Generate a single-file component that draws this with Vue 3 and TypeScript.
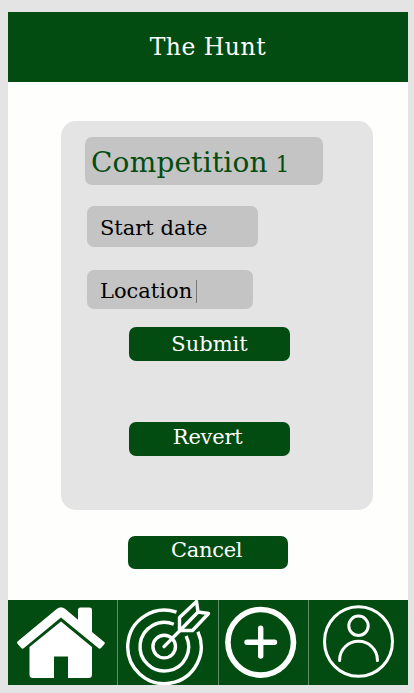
<script setup lang="ts">
import { ref } from 'vue'

const fields = ref([
  { id: 'start', label: 'Start date', focused: false },
  { id: 'location', label: 'Location', focused: true },
])
</script>

<template>
  <div class="screen">
    <header class="header"><h1 class="label">The Hunt</h1></header>
    <main class="content">
      <section class="card">
        <div class="field title"><span class="label">Competition <span class="num">1</span></span></div>
        <div v-for="f in fields" :key="f.id" class="field" :class="f.id">
          <span class="label">{{ f.label }}</span>
          <i v-if="f.focused" class="caret"></i>
        </div>
        <button class="btn submit"><span class="label">Submit</span></button>
        <button class="btn revert"><span class="label">Revert</span></button>
      </section>
      <button class="btn cancel"><span class="label">Cancel</span></button>
    </main>
    <nav class="nav">
      <a class="tab">
        <svg width="109" height="84" viewBox="8 600 109 84" fill="#fff">
          <path d="M17.5 641.5 57 608.7q4-3 8 0l13 11V610q0-2.5 2.5-2.5h9q2.5 0 2.5 2.5v22l12.500 10.300q.8.8 0 1.600l-3.500 4.200q-1.200 1.200-2.400.2L61 617.500 23.700 648.200q-1.200 1-2.400-.2l-3.800-4.300q-1-1.200 0-2.200z" />
          <path d="M61 621.500 92 647v27.500q0 3.500-3.500 3.500H68v-21.500H54V678H33q-3.500 0-3.500-3.500V647z" />
        </svg>
      </a>
      <a class="tab">
        <svg width="100" height="85" viewBox="118 600 100 85" fill="none" stroke="#fff" stroke-width="3.400">
          <path d="M176.500 612.200A36.700 36.700 0 1 0 197.900 631.800" />
          <path d="M173.800 624.300A24.300 24.300 0 1 0 186.100 635.900" />
          <circle cx="164.200" cy="646.600" r="11.300" />
          <path d="M164 646.600 180 630.500 197.500 612.500" stroke-linecap="round" />
          <path d="M179.500 630.500V617.500L196.500 601.500 198 612 208.500 613.500 192.500 630.500Z" stroke-linejoin="round" />
        </svg>
      </a>
      <a class="tab">
        <svg width="89" height="84" viewBox="219 600 89 84" fill="none" stroke="#fff">
          <circle cx="260.700" cy="642.300" r="32.800" stroke-width="5.600" />
          <path d="M247 642.200h27.500M260.700 628.300V656" stroke-width="5.400" stroke-linecap="round" />
        </svg>
      </a>
      <a class="tab">
        <svg width="98" height="84" viewBox="309 600 98 84" fill="none" stroke="#fff" stroke-width="3">
          <ellipse cx="358.500" cy="641.500" rx="34" ry="34.800" />
          <circle cx="358.500" cy="625.800" r="9.700" />
          <path d="M339.600 660.500V660a18.900 18.700 0 0 1 37.800 0v.5" stroke-linecap="round" />
        </svg>
      </a>
    </nav>
  </div>
</template>

<style>
body {
  background: #e4e4e4;
  overflow: hidden;
}
</style>

<style scoped>
.screen {
  box-sizing: border-box;
  width: 399.5px;
  height: 672.5px;
  margin: 12.3px 0 0 8.2px;
  background: #fefefc;
  font-family: 'DejaVu Serif', serif;
  font-size: 21px;
  display: flex;
  flex-direction: column;
  color: #000;
}
.header {
  height: 69.5px;
  flex: none;
  background: #034c11;
  color: #fff;
  padding-left: 141.5px;
}
h1 {
  margin: 0;
  font-size: 23.5px;
  font-weight: 400;
  line-height: 71px;
  letter-spacing: 0.5px;
}
.label {
  display: inline-block;
  white-space: nowrap;
}
.content {
  flex: 1;
  padding: 39.5px 0 0 52.8px;
}
.card {
  box-sizing: border-box;
  width: 312px;
  height: 389px;
  border-radius: 15px;
  background: #e4e4e4;
  padding: 15.7px 0 0 24px;
}
.field {
  display: flex;
  align-items: flex-start;
  box-sizing: border-box;
  border-radius: 7px;
  background: #c4c4c4;
}
.title {
  width: 238.5px;
  height: 48px;
  padding-left: 6px;
  font-size: 28px;
  line-height: 52px;
  letter-spacing: 0.2px;
  word-spacing: -1.5px;
  color: #034c11;
}
.num {
  font-size: 22px;
}
.start {
  width: 171px;
  height: 41.5px;
  margin: 20.8px 0 0 2px;
  padding-left: 13px;
  line-height: 45px;
}
.location {
  width: 166.5px;
  height: 39px;
  margin: 22.5px 0 0 2px;
  padding-left: 13px;
  line-height: 43px;
}
.location .label {
  width: 96px;
}
.caret {
  width: 1px;
  height: 23px;
  margin-top: 10px;
  background: #777;
}
.btn {
  display: flex;
  align-items: flex-start;
  width: 160.5px;
  height: 33.5px;
  padding: 0 0 0 42px;
  border: 0;
  border-radius: 7px;
  background: #034c11;
  color: #fff;
  font: inherit;
  text-align: left;
}
.submit {
  margin: 18.7px 0 0 44.3px;
  line-height: 34px;
}
.revert {
  margin: 61.5px 0 0 44.3px;
  padding-left: 43.5px;
  line-height: 30px;
  letter-spacing: -0.2px;
}
.cancel {
  margin: 25.4px 0 0 66.7px;
  padding-left: 43.3px;
  line-height: 29px;
  letter-spacing: -0.3px;
}
.nav {
  flex: none;
  display: flex;
  height: 84.5px;
  background: #034c11;
}
.tab {
  display: block;
  height: 84.5px;
}
.tab + .tab {
  border-left: 1px solid #608e69;
}
.tab svg {
  display: block;
}
</style>
